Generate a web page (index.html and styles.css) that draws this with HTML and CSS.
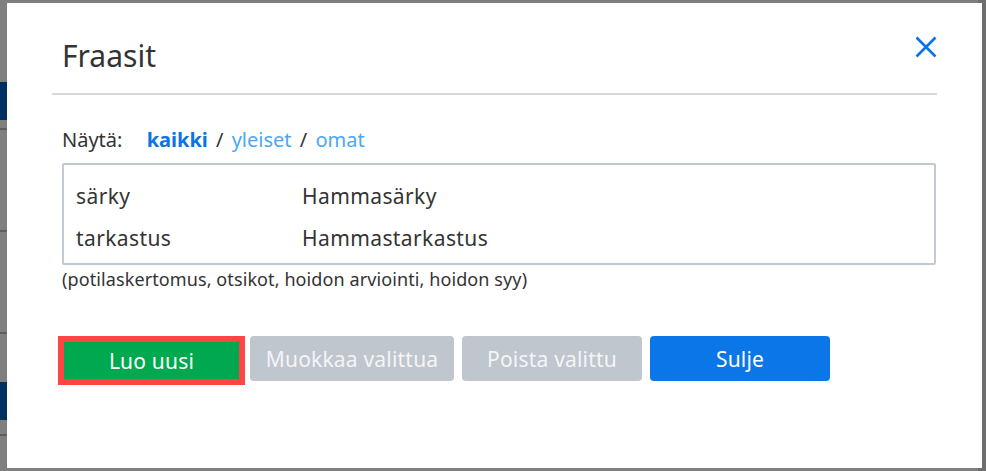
FILE: index.html
```html
<!DOCTYPE html>
<html lang="fi">
<head>
    <meta charset="UTF-8">
    <meta name="viewport" content="width=device-width, initial-scale=1.0">
    <title>Fraasit</title>
    <link rel="stylesheet" href="styles.css">
</head>
<body>
    <!-- Page behind the dialog -->
    <div class="page">
        <div class="page-row first"><span class="page-btn"></span></div>
        <div class="page-row"></div>
        <div class="page-row"></div>
        <div class="page-row"><span class="page-btn"></span></div>
    </div>

    <div class="backdrop">
        <div class="modal">
            <div class="modal-header">
                <h2 class="modal-title">Fraasit</h2>
                <button class="close-btn" aria-label="Sulje">
                    <svg width="22" height="22" viewBox="0 0 22 22">
                        <path d="M1.5 1.5 L20.5 20.5 M20.5 1.5 L1.5 20.5" stroke="#0a74e6" stroke-width="2.6" fill="none"/>
                    </svg>
                </button>
            </div>

            <div class="modal-body">
                <div class="filter">
                    <span class="filter-label">Näytä:</span>
                    <a href="#" class="filter-link active">kaikki</a>
                    <span class="sep">/</span>
                    <a href="#" class="filter-link">yleiset</a>
                    <span class="sep">/</span>
                    <a href="#" class="filter-link">omat</a>
                </div>

                <div class="phrase-list">
                    <div class="phrase-row">
                        <span class="phrase-key">särky</span>
                        <span class="phrase-text">Hammasärky</span>
                    </div>
                    <div class="phrase-row">
                        <span class="phrase-key">tarkastus</span>
                        <span class="phrase-text">Hammastarkastus</span>
                    </div>
                </div>
                <p class="hint">(potilaskertomus, otsikot, hoidon arviointi, hoidon syy)</p>

                <div class="actions">
                    <div class="focus-ring">
                        <button class="btn btn-green">Luo uusi</button>
                    </div>
                    <button class="btn btn-disabled btn-wide">Muokkaa valittua</button>
                    <button class="btn btn-disabled">Poista valittu</button>
                    <button class="btn btn-blue">Sulje</button>
                </div>
            </div>
        </div>
    </div>
</body>
</html>
```

FILE: styles.css
```css
/* General reset */
* {
    margin: 0;
    padding: 0;
    box-sizing: border-box;
}

body {
    font-family: 'Noto Sans', 'Open Sans', sans-serif;
    background-color: #ffffff;
    color: #333333;
    overflow: hidden;
}

/* Page behind the overlay */
.page {
    height: 471px;
    overflow: hidden;
    border-right: 8px solid #dddddd;
}

.page-row {
    height: 102px;
    border-bottom: 2px solid #bbbbbb;
}

.page-row.first {
    height: 130px;
    padding-top: 82px;
}

.page-row:nth-child(4) {
    padding-top: 48px;
}

.page-btn {
    display: block;
    width: 60px;
    height: 38px;
    background-color: #0060c0;
}

/* Dialog */
.backdrop {
    position: fixed;
    top: 0;
    left: 0;
    right: 0;
    bottom: 0;
    background-color: rgba(0, 0, 0, 0.5);
    padding: 3px 0 0 7px;
}

.modal {
    width: 975px;
    height: 465px;
    background-color: #ffffff;
    padding: 0 45px;
}

.modal-header {
    display: flex;
    align-items: center;
    justify-content: space-between;
    height: 92px;
    border-bottom: 2px solid #d5d9de;
    padding: 14px 0 0 10px;
}

.modal-title {
    font-size: 30px;
    font-weight: normal;
    color: #333333;
}

.close-btn {
    background: none;
    border: none;
    cursor: pointer;
    display: flex;
    margin-top: -16px;
}

.modal-body {
    padding: 0 1px 0 10px;
}

.filter {
    font-size: 20px;
    padding-top: 31px;
    height: 68px;
}

.filter-label {
    margin-right: 19px;
}

.filter-link {
    color: #4aa8f5;
    text-decoration: none;
}

.filter-link.active {
    color: #0a74e6;
    font-weight: bold;
}

.sep {
    margin: 0 3px;
}

.phrase-list {
    border: 2px solid #c3c9d1;
    border-radius: 2px;
    height: 102px;
    padding: 10px 0 0 12px;
}

.phrase-row {
    display: flex;
    font-size: 21px;
    letter-spacing: 0.4px;
    height: 42px;
    align-items: center;
}

.phrase-key {
    width: 226px;
}

.hint {
    font-size: 18px;
    letter-spacing: 0.1px;
    margin-top: 2px;
}

.actions {
    display: flex;
    align-items: flex-start;
    margin-top: 45px;
    margin-left: -4px;
    gap: 8px;
}

.focus-ring {
    border: 6px solid #ff4444;
    margin-right: -3px;
}

.btn {
    width: 180px;
    height: 45px;
    border: none;
    border-radius: 4px;
    font-family: inherit;
    font-size: 21px;
    letter-spacing: 0.2px;
    color: #ffffff;
    cursor: pointer;
}

.btn-green {
    display: block;
    width: 175px;
    height: 37px;
    border-radius: 0;
    background-color: #00a94f;
}

.btn-wide {
    width: 204px;
}

.btn-disabled {
    background-color: #c0c6ce;
    color: #f4f5f7;
}

.btn-blue {
    background-color: #0a76e8;
}
```
